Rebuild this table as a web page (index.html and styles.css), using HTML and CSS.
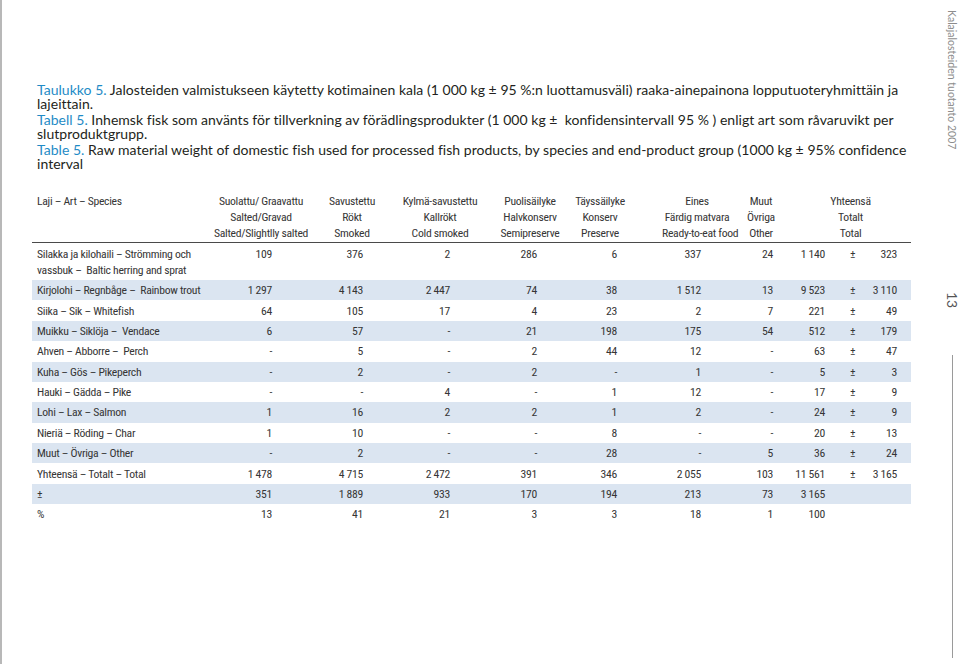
FILE: index.html
```html
<!DOCTYPE html>
<html lang="fi">
<head>
<meta charset="utf-8">
<title>Taulukko 5</title>
<link rel="stylesheet" href="styles.css">
</head>
<body>
<div class="page">
  <main class="main">
    <div class="caption">
      <p><span class="lbl">Taulukko 5.</span> Jalosteiden valmistukseen käytetty kotimainen kala (1 000 kg ± 95 %:n luottamusväli) raaka-ainepainona lopputuoteryhmittäin ja lajeittain.</p>
      <p><span class="lbl">Tabell 5.</span> Inhemsk fisk som använts för tillverkning av förädlingsprodukter (1 000 kg ±&nbsp; konfidensintervall 95 % ) enligt art som råvaruvikt per slutproduktgrupp.</p>
      <p><span class="lbl">Table 5.</span> Raw material weight of domestic fish used for processed fish products, by species and end-product group (1000 kg ± 95% confidence interval</p>
    </div>

    <div class="table">
      <div class="row head">
        <div class="c0">Laji – Art – Species</div>
        <div class="c1">Suolattu/ Graavattu<br>Salted/Gravad<br>Salted/Slightlly salted</div>
        <div class="c2">Savustettu<br>Rökt<br>Smoked</div>
        <div class="c3">Kylmä-savustettu<br>Kallrökt<br>Cold smoked</div>
        <div class="c4">Puolisäilyke<br>Halvkonserv<br>Semipreserve</div>
        <div class="c5">Täyssäilyke<br>Konserv<br>Preserve</div>
        <div class="c6">Eines<br>Färdig matvara<br>Ready-to-eat food</div>
        <div class="c7">Muut<br>Övriga<br>Other</div>
        <div class="tot">Yhteensä<br>Totalt<br>Total</div>
      </div>

      <div class="row tall">
        <div class="c0">Silakka ja kilohaili – Strömming och<br>vassbuk –&nbsp; Baltic herring and sprat</div>
        <div class="c1">109</div><div class="c2">376</div><div class="c3">2</div><div class="c4">286</div><div class="c5">6</div><div class="c6">337</div><div class="c7">24</div><div class="tv">1 140</div><div class="pm">±</div><div class="te">323</div>
      </div>
      <div class="row alt">
        <div class="c0">Kirjolohi – Regnbåge –&nbsp; Rainbow trout</div>
        <div class="c1">1 297</div><div class="c2">4 143</div><div class="c3">2 447</div><div class="c4">74</div><div class="c5">38</div><div class="c6">1 512</div><div class="c7">13</div><div class="tv">9 523</div><div class="pm">±</div><div class="te">3 110</div>
      </div>
      <div class="row">
        <div class="c0">Siika – Sik – Whitefish</div>
        <div class="c1">64</div><div class="c2">105</div><div class="c3">17</div><div class="c4">4</div><div class="c5">23</div><div class="c6">2</div><div class="c7">7</div><div class="tv">221</div><div class="pm">±</div><div class="te">49</div>
      </div>
      <div class="row alt">
        <div class="c0">Muikku – Siklöja –&nbsp; Vendace</div>
        <div class="c1">6</div><div class="c2">57</div><div class="c3">-</div><div class="c4">21</div><div class="c5">198</div><div class="c6">175</div><div class="c7">54</div><div class="tv">512</div><div class="pm">±</div><div class="te">179</div>
      </div>
      <div class="row">
        <div class="c0">Ahven – Abborre –&nbsp; Perch</div>
        <div class="c1">-</div><div class="c2">5</div><div class="c3">-</div><div class="c4">2</div><div class="c5">44</div><div class="c6">12</div><div class="c7">-</div><div class="tv">63</div><div class="pm">±</div><div class="te">47</div>
      </div>
      <div class="row alt">
        <div class="c0">Kuha – Gös – Pikeperch</div>
        <div class="c1">-</div><div class="c2">2</div><div class="c3">-</div><div class="c4">2</div><div class="c5">-</div><div class="c6">1</div><div class="c7">-</div><div class="tv">5</div><div class="pm">±</div><div class="te">3</div>
      </div>
      <div class="row">
        <div class="c0">Hauki – Gädda – Pike</div>
        <div class="c1">-</div><div class="c2">-</div><div class="c3">4</div><div class="c4">-</div><div class="c5">1</div><div class="c6">12</div><div class="c7">-</div><div class="tv">17</div><div class="pm">±</div><div class="te">9</div>
      </div>
      <div class="row alt">
        <div class="c0">Lohi – Lax – Salmon</div>
        <div class="c1">1</div><div class="c2">16</div><div class="c3">2</div><div class="c4">2</div><div class="c5">1</div><div class="c6">2</div><div class="c7">-</div><div class="tv">24</div><div class="pm">±</div><div class="te">9</div>
      </div>
      <div class="row">
        <div class="c0">Nieriä – Röding – Char</div>
        <div class="c1">1</div><div class="c2">10</div><div class="c3">-</div><div class="c4">-</div><div class="c5">8</div><div class="c6">-</div><div class="c7">-</div><div class="tv">20</div><div class="pm">±</div><div class="te">13</div>
      </div>
      <div class="row alt">
        <div class="c0">Muut – Övriga – Other</div>
        <div class="c1">-</div><div class="c2">2</div><div class="c3">-</div><div class="c4">-</div><div class="c5">28</div><div class="c6">-</div><div class="c7">5</div><div class="tv">36</div><div class="pm">±</div><div class="te">24</div>
      </div>
      <div class="row">
        <div class="c0">Yhteensä – Totalt – Total</div>
        <div class="c1">1 478</div><div class="c2">4 715</div><div class="c3">2 472</div><div class="c4">391</div><div class="c5">346</div><div class="c6">2 055</div><div class="c7">103</div><div class="tv">11 561</div><div class="pm">±</div><div class="te">3 165</div>
      </div>
      <div class="row alt">
        <div class="c0">±</div>
        <div class="c1">351</div><div class="c2">1 889</div><div class="c3">933</div><div class="c4">170</div><div class="c5">194</div><div class="c6">213</div><div class="c7">73</div><div class="tv">3 165</div><div class="pm"></div><div class="te"></div>
      </div>
      <div class="row">
        <div class="c0">%</div>
        <div class="c1">13</div><div class="c2">41</div><div class="c3">21</div><div class="c4">3</div><div class="c5">3</div><div class="c6">18</div><div class="c7">1</div><div class="tv">100</div><div class="pm"></div><div class="te"></div>
      </div>
    </div>
  </main>

  <aside class="side">
    <div class="running">Kalajalosteiden tuotanto 2007</div>
    <div class="pageno">13</div>
    <div class="rule"></div>
  </aside>
</div>
</body>
</html>
```

FILE: styles.css
```css
html, body {
  margin: 0;
  padding: 0;
  background: #ffffff;
}

.page {
  display: flex;
  width: 960px;
  height: 664px;
  box-sizing: border-box;
  border-left: 2px solid #b8b8b8;
  overflow: hidden;
}

.main {
  flex: 1;
  padding: 83px 0 0 30px;
  min-width: 0;
}

/* caption */
.caption {
  width: 878px;
  padding-left: 5px;
  box-sizing: border-box;
  font-family: Lato, "Open Sans", "Noto Sans", sans-serif;
  font-size: 14px;
  letter-spacing: 0.03px;
  line-height: 14px;
  color: #231f20;
}

.caption p {
  margin: 0 0 2px 0;
}

.caption .lbl {
  color: #1f8bc6;
}

/* table */
.table {
  margin-top: 22px;
  width: 879px;
  font-family: "Roboto Condensed", "Liberation Sans Narrow", "Open Sans", sans-serif;
  font-stretch: 75%;
  font-size: 11.7px;
  letter-spacing: -0.3px;
  color: #363636;
}

.row {
  display: grid;
  grid-template-columns: 182px 94px 88px 88px 82px 74px 92px 58px 42px 38px 41px;
  line-height: 16px;
  padding: 2.2px 0;
  white-space: nowrap;
}

.row.alt {
  background: #dbe5f1;
}

.row > div {
  text-align: right;
}

.row .c0 {
  text-align: left;
  padding-left: 5px;
}

.row .c1 { padding-right: 36px; }
.row .c2 { padding-right: 33px; }
.row .c3 { padding-right: 34px; }
.row .c4 { padding-right: 29px; }
.row .c5 { padding-right: 23px; }
.row .c6 { padding-right: 31px; }
.row .c7 { padding-right: 17px; }
.row .tv { padding-right: 7px; }
.row .pm { text-align: left; padding-left: 18px; }
.row .te { padding-right: 14px; }

.row.tall {
  padding: 3px 0 2px 0;
}

/* header */
.row.head {
  padding: 0 0 1px 0;
  border-bottom: 1px solid #4a4a4a;
}

.row.head > div {
  text-align: center;
  padding: 0;
}

.row.head .c0 {
  text-align: left;
  padding-left: 5px;
}

.row.head .c4 { padding-left: 10px; }
.row.head .c5 { padding-right: 6px; }
.row.head .c6 { padding-left: 22px; }
.row.head .tot { grid-column: 9 / 12; }

/* side margin */
.side {
  width: 16px;
  display: flex;
  flex-direction: column;
  align-items: center;
  padding-top: 10px;
  font-family: Lato, "Open Sans", sans-serif;
}

.running {
  writing-mode: vertical-rl;
  height: 142px;
  flex: none;
  font-size: 10.5px;
  line-height: 12px;
  color: #8c8c8c;
  white-space: nowrap;
}

.pageno {
  writing-mode: vertical-rl;
  flex: none;
  margin-top: 140px;
  height: 17px;
  font-size: 14px;
  line-height: 14px;
  color: #555555;
}

.rule {
  flex: none;
  margin-top: 46px;
  width: 1px;
  height: 303px;
  background: #9a9a9a;
}
```
